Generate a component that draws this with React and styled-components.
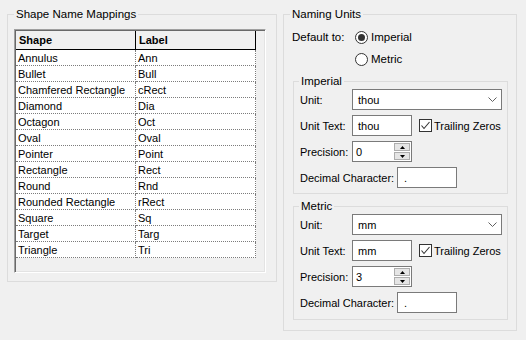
import React from 'react';
import styled, {createGlobalStyle} from 'styled-components';

const GlobalStyle = createGlobalStyle`
    html, body {
        margin: 0;
        padding: 0;
        background: #f0f0f0;
    }
    body {
        font-family: "Liberation Sans", Arial, sans-serif;
        font-size: 11px;
        color: #000;
    }
`;

const uiFont = `"Liberation Sans", Arial, sans-serif`;

const Page = styled.div`
    width: 526px;
    height: 340px;
    box-sizing: border-box;
    padding: 6px 0 0 7px;
    display: flex;
    align-items: flex-start;
    gap: 6px;
`;

const Group = styled.fieldset`
    box-sizing: border-box;
    margin: 0;
    min-width: 0;
    width: ${p => p.$w}px;
    height: ${p => p.$h}px;
    border: 1px solid #dcdcdc;
    padding: ${p => p.$pad};
    display: flex;
    flex-direction: column;
`;

const Legend = styled.legend`
    font-family: ${uiFont};
    font-size: 11.5px;
    line-height: 16px;
    padding: 0 2px;
    margin-left: ${p => p.$ml}px;
`;

/* ---------- list view ---------- */

const ListView = styled.div`
    box-sizing: border-box;
    width: 252px;
    height: 244px;
    background: #f0f0f0;
    border: 1px solid;
    border-color: #a0a0a0 #fff #fff #a0a0a0;
    box-shadow: inset 1px 1px #696969, inset -1px -1px #e3e3e3;
    padding: 1px;
    font-size: 11px;
`;

const Row = styled.div`
    display: flex;
`;

const HeadCell = styled.div`
    box-sizing: border-box;
    width: 120px;
    height: 19px;
    padding-left: 3px;
    display: flex;
    align-items: center;
    font-weight: bold;
    background: #f0f0f0;
    border-right: 1px solid #000;
    border-bottom: 1px solid #000;
`;

const Cell = styled.div`
    box-sizing: border-box;
    width: 120px;
    height: 16px;
    padding-left: 2px;
    display: flex;
    align-items: center;
    background: #fff;
    border-right: 1px dotted #7c7c7c;
    border-bottom: 1px dotted #7c7c7c;
    white-space: nowrap;
`;

/* ---------- right side ---------- */

const DefaultRow = styled.div`
    display: flex;
    margin-top: 7px;
    font-size: 11.5px;
`;

const DefaultLabel = styled.div`
    width: 63px;
    line-height: 16px;
`;

const RadioCol = styled.div`
    display: flex;
    flex-direction: column;
    gap: 6px;
`;

const OptionLine = styled.label`
    display: flex;
    align-items: center;
    height: 16px;
    gap: 3px;
`;

const SubGroups = styled.div`
    display: flex;
    flex-direction: column;
    gap: 4px;
    margin-top: 6px;
    margin-left: 1px;
`;

const Form = styled.div`
    display: flex;
    flex-direction: column;
    gap: 5px;
    font-size: 11px;
`;

const FieldRow = styled.div`
    display: flex;
    align-items: center;
    height: 21px;
`;

const FieldLabel = styled.div`
    width: ${p => p.$w}px;
    flex: none;
    white-space: nowrap;
`;

const Box = styled.div`
    box-sizing: border-box;
    width: ${p => p.$w}px;
    height: 21px;
    flex: none;
    background: #fff;
    border: 1px solid #7a7a7a;
    display: flex;
    align-items: center;
    padding-left: ${p => p.$pl}px;
    font-size: 11px;
`;

const Value = styled.span`
    flex: 1;
`;

const Chevron = styled.svg`
    margin-right: 4px;
`;

const SpinButtons = styled.div`
    display: flex;
    flex-direction: column;
    align-self: stretch;
    width: 16px;
    margin: 0 1px 0 0;
    padding: 1px 0;
    gap: 1px;
`;

const SpinBtn = styled.div`
    flex: 1;
    background: #e5e5e5;
    border: 1px solid #adadad;
    display: flex;
    align-items: center;
    justify-content: center;
`;

const CheckLine = styled.label`
    display: flex;
    align-items: center;
    flex: none;
    white-space: nowrap;
    gap: 2px;
    margin-left: 7px;
`;

const Radio = ({checked}) => (
    <svg width="13" height="13" viewBox="0 0 13 13">
        <circle cx="6.5" cy="6.5" r="6" fill="#fff" stroke="#333"/>
        {checked && <circle cx="6.5" cy="6.5" r="3.5" fill="#333"/>}
    </svg>
);

const Check = () => (
    <svg width="13" height="13" viewBox="0 0 13 13">
        <rect x="0.5" y="0.5" width="12" height="12" fill="#fff" stroke="#333"/>
        <path d="M2.5 6.5 L5 9.5 L10.5 3" fill="none" stroke="#333" strokeWidth="1.1"/>
    </svg>
);

const mappings = [
    ['Annulus', 'Ann'],
    ['Bullet', 'Bull'],
    ['Chamfered Rectangle', 'cRect'],
    ['Diamond', 'Dia'],
    ['Octagon', 'Oct'],
    ['Oval', 'Oval'],
    ['Pointer', 'Point'],
    ['Rectangle', 'Rect'],
    ['Round', 'Rnd'],
    ['Rounded Rectangle', 'rRect'],
    ['Square', 'Sq'],
    ['Target', 'Targ'],
    ['Triangle', 'Tri'],
];

const UnitGroup = ({title, unit, text, precision, height}) => (
    <Group $w={215} $h={height} $pad="0 5px 0 6px">
        <Legend $ml={-1}>{title}</Legend>
        <Form>
            <FieldRow>
                <FieldLabel $w={52}>Unit:</FieldLabel>
                <Box $w={150} $pl={5}>
                    <Value>{unit}</Value>
                    <Chevron width="9" height="5" viewBox="0 0 9 5">
                        <path d="M0.5 0.5 L4.5 4.5 L8.5 0.5" fill="none" stroke="#606060"/>
                    </Chevron>
                </Box>
            </FieldRow>
            <FieldRow>
                <FieldLabel $w={52}>Unit Text:</FieldLabel>
                <Box $w={60} $pl={5}>{text}</Box>
                <CheckLine>
                    <Check/>
                    Trailing Zeros
                </CheckLine>
            </FieldRow>
            <FieldRow>
                <FieldLabel $w={52}>Precision:</FieldLabel>
                <Box $w={60} $pl={3}>
                    <Value>{precision}</Value>
                    <SpinButtons>
                        <SpinBtn>
                            <svg width="5" height="3" viewBox="0 0 5 3"><path d="M2.5 0 L5 3 L0 3 Z" fill="#000"/></svg>
                        </SpinBtn>
                        <SpinBtn>
                            <svg width="5" height="3" viewBox="0 0 5 3"><path d="M0 0 L5 0 L2.5 3 Z" fill="#000"/></svg>
                        </SpinBtn>
                    </SpinButtons>
                </Box>
            </FieldRow>
            <FieldRow>
                <FieldLabel $w={97}>Decimal Character:</FieldLabel>
                <Box $w={60} $pl={6}>.</Box>
            </FieldRow>
        </Form>
    </Group>
);

export default function App() {
    return (
        <Page>
            <GlobalStyle/>
            <Group $w={270} $h={276} $pad="7px 9px 7px 6px">
                <Legend $ml={0}>Shape Name Mappings</Legend>
                <ListView>
                    <Row>
                        <HeadCell>Shape</HeadCell>
                        <HeadCell>Label</HeadCell>
                    </Row>
                    {mappings.map(([shape, label]) => (
                        <Row key={shape}>
                            <Cell>{shape}</Cell>
                            <Cell>{label}</Cell>
                        </Row>
                    ))}
                </ListView>
            </Group>
            <Group $w={234} $h={325} $pad="0 8px 0 8px">
                <Legend $ml={-2}>Naming Units</Legend>
                <DefaultRow>
                    <DefaultLabel>Default to:</DefaultLabel>
                    <RadioCol>
                        <OptionLine><Radio checked/>Imperial</OptionLine>
                        <OptionLine><Radio/>Metric</OptionLine>
                    </RadioCol>
                </DefaultRow>
                <SubGroups>
                    <UnitGroup title="Imperial" unit="thou" text="thou" precision="0" height={121}/>
                    <UnitGroup title="Metric" unit="mm" text="mm" precision="3" height={122}/>
                </SubGroups>
            </Group>
        </Page>
    );
}
